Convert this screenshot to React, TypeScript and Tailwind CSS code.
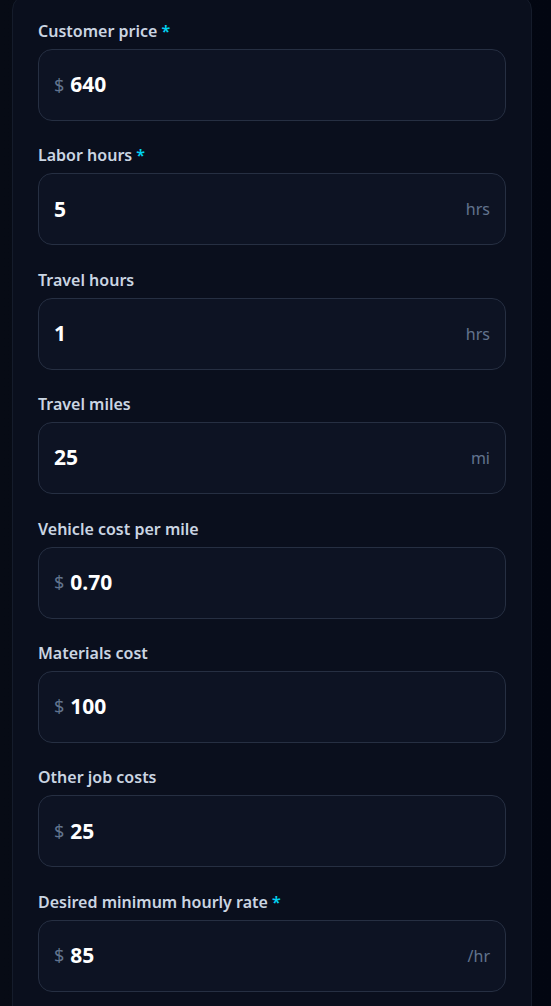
const fields = [
  { label: "Customer price", required: true, value: "640", prefix: "$" },
  { label: "Labor hours", required: true, value: "5", suffix: "hrs" },
  { label: "Travel hours", value: "1", suffix: "hrs" },
  { label: "Travel miles", value: "25", suffix: "mi" },
  { label: "Vehicle cost per mile", value: "0.70", prefix: "$" },
  { label: "Materials cost", value: "100", prefix: "$" },
  { label: "Other job costs", value: "25", prefix: "$" },
  { label: "Desired minimum hourly rate", required: true, value: "85", prefix: "$", suffix: "/hr" },
];

type Field = {
  label: string;
  value: string;
  required?: boolean;
  prefix?: string;
  suffix?: string;
};

function NumberField({ field }: { field: Field }) {
  return (
    <div className="flex flex-col">
      <label className="h-6 text-[16px] font-semibold leading-6 text-slate-300">
        {field.label}
        {field.required && <span className="ml-1 text-cyan-400">*</span>}
      </label>
      <div className="mt-1.5 flex h-[72px] items-center rounded-[14px] border border-[#262f42] bg-[#0d1323] pl-[15px] pr-[15px]">
        {field.prefix && <span className="mr-1.5 text-[18px] text-slate-500">{field.prefix}</span>}
        <span className="flex-1 text-[21px] font-bold text-white">{field.value}</span>
        {field.suffix && <span className="text-[16px] text-slate-500">{field.suffix}</span>}
      </div>
    </div>
  );
}

export default function App() {
  return (
    <div
      className="min-h-screen overflow-hidden bg-gradient-to-r from-[#070b15] to-[#020611]"
      style={{ fontFamily: '"Noto Sans", "Open Sans", sans-serif' }}
    >
      <div className="-mt-[6px] ml-3 w-[520px] rounded-2xl border border-[#151c2b] bg-[#0a0f1d] px-[25px] pt-6 pb-10">
        <div className="flex flex-col gap-[22.4px]">
          {fields.map((field) => (
            <NumberField key={field.label} field={field} />
          ))}
        </div>
      </div>
    </div>
  );
}
